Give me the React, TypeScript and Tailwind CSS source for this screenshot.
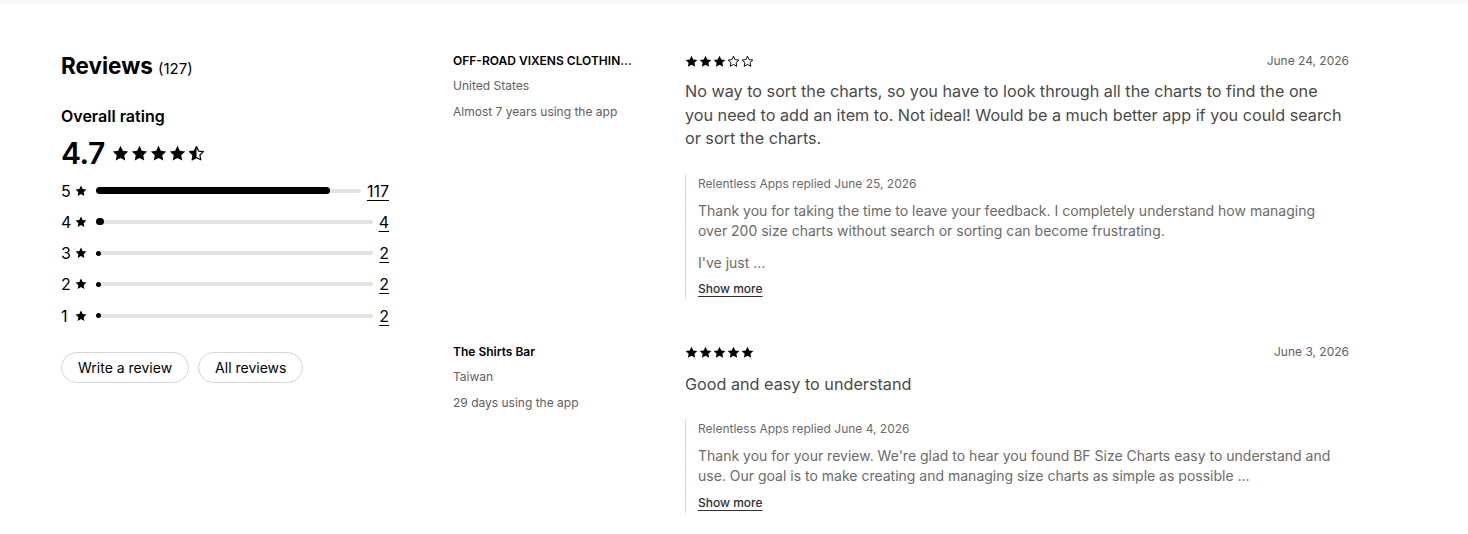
import React from "react";

const STAR = "M12 1.2l3.3 6.9 7.5 1-5.5 5.2 1.4 7.5L12 18.2l-6.7 3.6 1.4-7.5L1.2 9.1l7.5-1L12 1.2z";

const Star = ({ kind = "full", size = 12 }: { kind?: "full" | "empty" | "half"; size?: number }) => (
  <svg width={size} height={size} viewBox="0 0 24 24" className="shrink-0">
    <defs>
      <clipPath id="half-clip">
        <rect x="0" y="0" width="12" height="24" />
      </clipPath>
    </defs>
    {kind === "full" && <path d={STAR} fill="#000" />}
    {kind !== "full" && (
      <path d={STAR} fill="none" stroke="#000" strokeWidth="2" strokeLinejoin="round" transform="translate(1.2 1.2) scale(0.9)" />
    )}
    {kind === "half" && <path d={STAR} fill="#000" clipPath="url(#half-clip)" />}
  </svg>
);

const Stars = ({ value, size, gap }: { value: number; size: number; gap: string }) => (
  <div className={`flex items-center ${gap}`}>
    {[1, 2, 3, 4, 5].map((i) => (
      <Star key={i} size={size} kind={value >= i ? "full" : value >= i - 0.5 ? "half" : "empty"} />
    ))}
  </div>
);

const breakdown = [
  { stars: 5, count: 117, fill: "w-[234px] h-[7px]" },
  { stars: 4, count: 4, fill: "w-[8px] h-[7px]" },
  { stars: 3, count: 2, fill: "w-[5px] h-[5px]" },
  { stars: 2, count: 2, fill: "w-[5px] h-[5px]" },
  { stars: 1, count: 2, fill: "w-[5px] h-[5px]" },
];

const reviews = [
  {
    name: "OFF-ROAD VIXENS CLOTHING COMPANY",
    country: "United States",
    usage: "Almost 7 years using the app",
    rating: 3,
    date: "June 24, 2026",
    body: "No way to sort the charts, so you have to look through all the charts to find the one you need to add an item to. Not ideal! Would be a much better app if you could search or sort the charts.",
    replied: "Relentless Apps replied June 25, 2026",
    reply: [
      "Thank you for taking the time to leave your feedback. I completely understand how managing over 200 size charts without search or sorting can become frustrating.",
      "I've just ...",
    ],
  },
  {
    name: "The Shirts Bar",
    country: "Taiwan",
    usage: "29 days using the app",
    rating: 5,
    date: "June 3, 2026",
    body: "Good and easy to understand",
    replied: "Relentless Apps replied June 4, 2026",
    reply: [
      "Thank you for your review. We're glad to hear you found BF Size Charts easy to understand and use. Our goal is to make creating and managing size charts as simple as possible ...",
    ],
  },
];

export default function App() {
  return (
    <div className="min-h-[534px] bg-white font-['Inter',sans-serif] text-[#303030]">
      <div className="h-[4px] bg-[#fafafa]" />
      <div className="flex pl-[61px] pt-[42px]">
        {/* summary */}
        <div className="w-[328px] shrink-0">
          <h2 className="flex items-baseline leading-[40px]">
            <span className="text-[22.5px] font-bold text-black">Reviews</span>
            <span className="ml-[5px] text-[15px] text-black">(127)</span>
          </h2>
          <div className="mt-[15px] text-[16px] font-semibold leading-[24px] text-black">Overall rating</div>
          <div className="mt-[5px] flex items-center">
            <span className="text-[30px] font-semibold leading-[40px] tracking-[-0.5px] text-black">4.7</span>
            <div className="ml-[7px]">
              <Stars value={4.5} size={17} gap="gap-[2px]" />
            </div>
          </div>
          <div className="mt-[2px] flex flex-col">
            {breakdown.map((r) => (
              <div key={r.stars} className="flex h-[31.25px] items-center">
                <span className="w-[9px] text-[16px] text-black">{r.stars}</span>
                <span className="ml-[5px]">
                  <Star size={12} />
                </span>
                <div className="ml-[9px] flex flex-1 items-center">
                  <div className={`${r.fill} shrink-0 rounded-full bg-black`} />
                  <div className="h-[4px] flex-1 rounded-r-full bg-[#e3e3e3]" />
                </div>
                <span className="ml-[6px] text-[16px] text-black underline underline-offset-[3px] decoration-1">
                  {r.count}
                </span>
              </div>
            ))}
          </div>
          <div className="mt-[21px] flex gap-[9px]">
            <button className="h-[31px] rounded-full border border-[#d4d4d4] px-[16px] text-[14px] text-black">
              Write a review
            </button>
            <button className="h-[31px] rounded-full border border-[#d4d4d4] px-[16px] text-[14px] text-black">
              All reviews
            </button>
          </div>
        </div>

        {/* list */}
        <div className="ml-[64px] w-[896px]">
          {reviews.map((r, idx) => (
            <div key={r.name} className={`flex ${idx === 0 ? "pt-[7px]" : "pt-[45px]"}`}>
              <div className="w-[182px] shrink-0">
                <div className="truncate text-[12px] font-semibold leading-[16px] text-black">{r.name}</div>
                <div className="mt-[7px] text-[12px] leading-[20px] text-[#616161]">{r.country}</div>
                <div className="mt-[6px] text-[12px] leading-[20px] text-[#616161]">{r.usage}</div>
              </div>
              <div className="ml-[50px] w-[664px]">
                <div className="flex h-[16px] items-center justify-between">
                  <Stars value={r.rating} size={13} gap="gap-[1px]" />
                  <span className="text-[12px] text-[#616161]">{r.date}</span>
                </div>
                <p className={`${idx === 0 ? "mt-[11px]" : "mt-[13px]"} text-[16.2px] leading-[23.5px] text-[#4a4a4a]`}>
                  {r.body}
                </p>
                <div className={`${idx === 0 ? "mt-[23px]" : "mt-[22px]"} border-l border-[#d9d9d9] pl-[12px]`}>
                  <div className="text-[12px] leading-[20px] text-[#6b6b6b]">{r.replied}</div>
                  {r.reply.map((p, i) => (
                    <p
                      key={i}
                      className={`${i === 0 ? "mt-[7px]" : "mt-[11px]"} pr-[12px] text-[14px] leading-[20.5px] text-[#6b6b6b]`}
                    >
                      {p}
                    </p>
                  ))}
                  <button className="mt-[6px] text-[12px] font-medium leading-[20px] text-[#303030] underline underline-offset-[3px] decoration-1">
                    Show more
                  </button>
                </div>
              </div>
            </div>
          ))}
        </div>
      </div>
    </div>
  );
}
